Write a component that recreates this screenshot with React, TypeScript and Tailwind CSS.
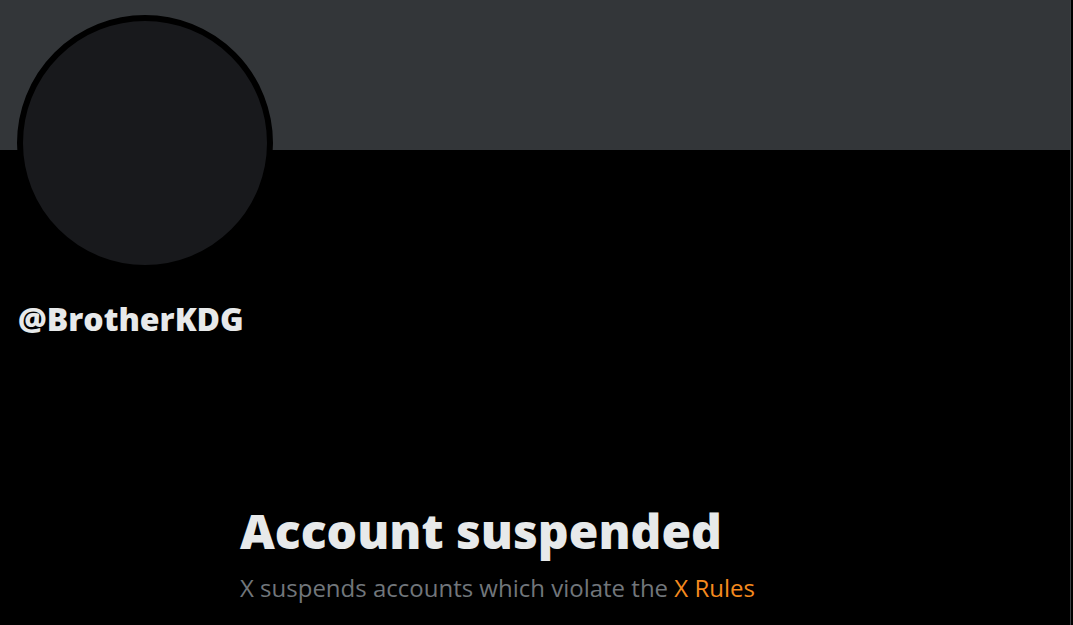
import React from 'react';

const ProfileHeader: React.FC<{ handle: string }> = ({ handle }) => {
  return (
    <div>
      <div className="h-[150px] bg-[#333639]" />
      <div className="-mt-[135px] ml-[17px] h-[256px] w-[256px] rounded-full border-[6px] border-black bg-[#18191c]" />
      <div className="mt-[28px] pl-[18px] text-[32px] leading-[40px] font-extrabold text-[#e7e9ea]">
        {handle}
      </div>
    </div>
  );
};

const SuspendedNotice: React.FC = () => {
  return (
    <div className="mt-[163px] pl-[240px]">
      <h1 className="text-[48px] leading-[58px] font-extrabold text-[#e7e9ea]">Account suspended</h1>
      <p className="mt-[13px] text-[24px] leading-[30px] font-normal text-[#71767b]">
        X suspends accounts which violate the <span className="text-[#f58a1e]">X Rules</span>
      </p>
    </div>
  );
};

const App: React.FC = () => {
  return (
    <div className="flex h-[625px] w-full overflow-hidden bg-black" style={{ fontFamily: '"Open Sans", "Noto Sans", sans-serif' }}>
      <main className="w-[1070px] shrink-0">
        <ProfileHeader handle="@BrotherKDG" />
        <SuspendedNotice />
      </main>
      <div className="w-px bg-[#3e4144]" />
    </div>
  );
};

export default App;
